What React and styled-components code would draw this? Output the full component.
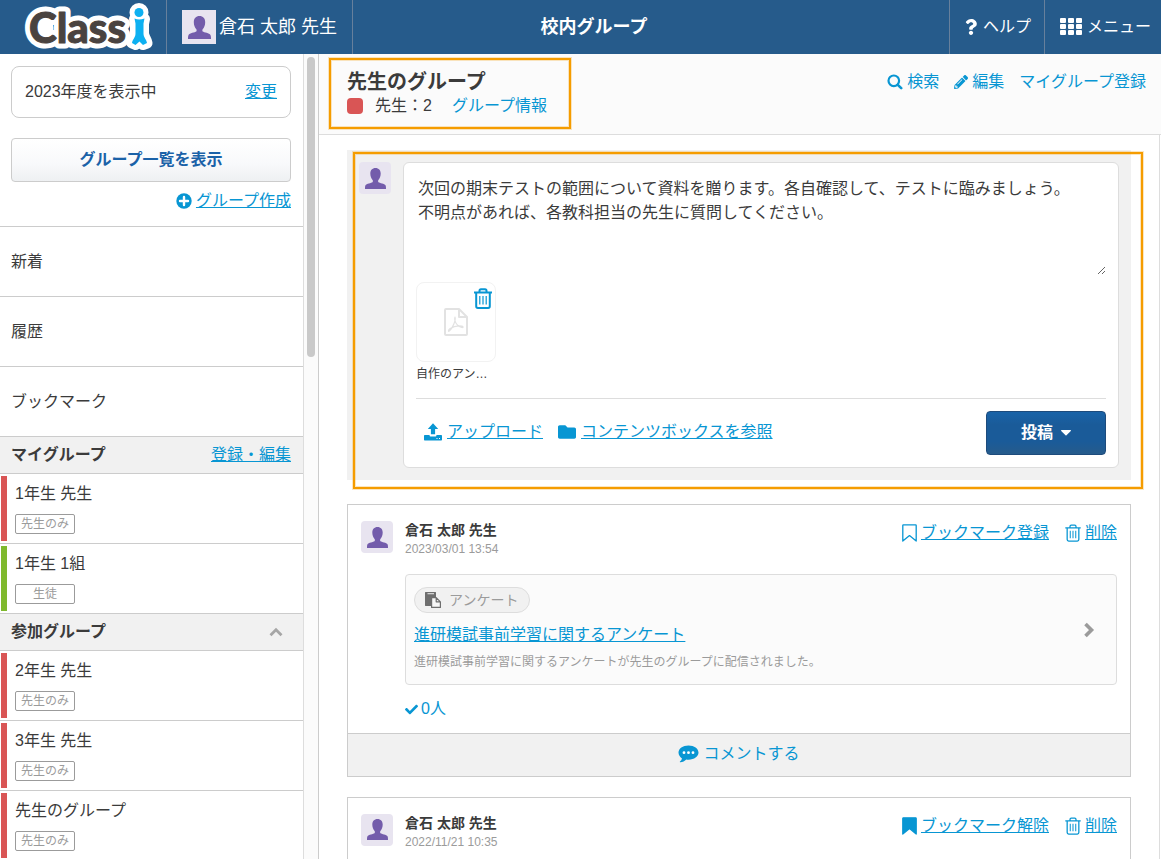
import React from "react";
import styled, { createGlobalStyle } from "styled-components";
import { FaQuestion, FaFolder, FaCheck, FaPencilAlt } from "react-icons/fa";

const color = {
  navy: "#265b8b",
  link: "#0896d3",
  text: "#3b3b3b",
  muted: "#9b9b9b",
  line: "#cccccc",
  softLine: "#dddddd",
  panel: "#f1f1f1",
  pale: "#fbfbfb",
  red: "#d95555",
  green: "#7fb92e",
  purple: "#735cab",
  lilac: "#e8e4f0",
  orange: "#f59c00",
};

const GlobalStyle = createGlobalStyle`
  *, *::before, *::after { box-sizing: border-box; }
  body {
    margin: 0;
    background: #fff;
    color: ${color.text};
    font: 16px/24px "Liberation Sans", "Noto Sans CJK JP", sans-serif;
  }
  h1, h2, h3, p, ul { margin: 0; padding: 0; }
  ul { list-style: none; }
  button, textarea { font: inherit; color: inherit; }
  button { cursor: pointer; }
  svg { display: block; flex: none; }
`;

/* ---------- page frame ---------- */

const Page = styled.div`
  display: flex;
  flex-direction: column;
  height: 100vh;
`;

const TopBar = styled.header`
  display: flex;
  flex: none;
  height: 54px;
  background: ${color.navy};
  color: #fff;
`;

const BarCell = styled.a`
  display: flex;
  align-items: center;
  gap: ${(p) => p.$gap || 0}px;
  padding: ${(p) => p.$pad};
  color: #fff;
  font-size: ${(p) => p.$size || 16}px;
  text-decoration: none;
  white-space: nowrap;
  border: 0 solid #67809c;
  border-width: ${(p) => (p.$side === "left" ? "0 0 0 1px" : "0 1px 0 0")};
`;

const BarTitle = styled.h1`
  flex: 1;
  padding-right: 114px;
  font-size: 18px;
  line-height: 54px;
  text-align: center;
`;

const Body = styled.div`
  display: flex;
  flex: 1;
  min-height: 0;
`;

/* ---------- avatar ---------- */

const AvatarTile = styled.span`
  display: flex;
  flex: none;
  align-items: center;
  justify-content: center;
  width: ${(p) => p.$size}px;
  height: ${(p) => p.$size}px;
  border-radius: ${(p) => p.$radius}px;
  background: ${color.lilac};
  color: ${color.purple};
`;

function Avatar({ size = 32, radius = 4 }) {
  const icon = size === 34 ? 23 : 21;
  return (
    <AvatarTile $size={size} $radius={radius}>
      <svg width={icon} height={icon} viewBox="0 0 21 21" fill="currentColor" aria-hidden="true">
        <path d="M10.5 0c3.2 0 5.2 2.2 5.2 5.6 0 2.8-1 5.1-2.3 6.4-.4.5-.4 1.7.1 2.200 1 .9 6.200 1.300 7 3.100.5 1 .5 2.500.5 3.700H0c0-1.200 0-2.700.5-3.700.8-1.800 6-2.200 7-3.100.5-.5.5-1.700.1-2.200C6.300 10.700 5.300 8.400 5.300 5.600 5.300 2.200 7.300 0 10.500 0z" />
      </svg>
    </AvatarTile>
  );
}

/* ---------- sidebar ---------- */

const Sidebar = styled.nav`
  flex: none;
  width: 304px;
  overflow: hidden;
  border-right: 1px solid ${color.softLine};
`;

const ScrollGutter = styled.div`
  flex: none;
  width: 15px;
  padding: 3px 3px 0;
  background: ${color.pale};
  border-right: 1px solid ${color.line};
`;

const ScrollThumb = styled.div`
  height: 300px;
  width: 8px;
  border-radius: 4px;
  background: #c9c9c9;
`;

const SidebarTop = styled.div`
  padding: 12px 12px 13px 11px;
  border-bottom: 1px solid ${color.line};
`;

const YearBox = styled.div`
  display: flex;
  justify-content: space-between;
  padding: 13px;
  height: 52px;
  border: 1px solid ${color.line};
  border-radius: 8px;
`;

const ListButton = styled.button`
  display: block;
  width: 100%;
  height: 44px;
  margin: 20px 0 7px;
  padding: 0;
  border: 1px solid ${color.line};
  border-radius: 4px;
  background: linear-gradient(#fff, #f8f9fb 60%, #eef0f2);
  color: #1b62a8;
  font-weight: bold;
`;

const Link = styled.a`
  color: ${color.link};
  text-decoration: ${(p) => (p.$plain ? "none" : "underline")};
  text-decoration-thickness: 1px;
  white-space: nowrap;
`;

const IconLink = styled.span`
  display: inline-flex;
  align-items: center;
  gap: ${(p) => p.$gap || 4}px;
  color: ${color.link};
`;

const CreateRow = styled.div`
  display: flex;
  justify-content: flex-end;
`;

const MenuItem = styled.a`
  display: flex;
  align-items: center;
  height: 70px;
  padding: 0 11px;
  border-bottom: 1px solid ${color.line};
  color: inherit;
  text-decoration: none;
`;

const SectionHead = styled.div`
  display: flex;
  align-items: center;
  justify-content: space-between;
  height: 37px;
  padding: 0 12px 0 11px;
  border-bottom: 1px solid ${color.line};
  background: ${color.panel};
  color: ${color.text};
`;

const SectionTitle = styled.h2`
  font-size: 16px;
`;

const ToggleButton = styled.button`
  padding: 0 8px;
  border: 0;
  background: none;
  color: #a6a6a6;
`;

const GroupRow = styled.li`
  display: flex;
  gap: 8px;
  height: 70px;
  padding: 2px 1px;
  border-bottom: 1px solid ${color.line};
`;

const ColorBar = styled.span`
  flex: none;
  width: 6px;
  height: 65px;
  background: ${(p) => p.$color};
`;

const GroupText = styled.div`
  display: flex;
  flex-direction: column;
  align-items: flex-start;
  gap: 8px;
  padding-top: 6px;
`;

const Badge = styled.span`
  width: 60px;
  height: 20px;
  border: 1px solid ${color.muted};
  border-radius: 2px;
  color: ${color.muted};
  font-size: 12px;
  line-height: 18px;
  text-align: center;
`;

/* ---------- main column ---------- */

const Main = styled.main`
  display: flex;
  flex: 1;
  flex-direction: column;
  min-width: 0;
  overflow: hidden;
`;

const GroupHeader = styled.div`
  position: relative;
  display: flex;
  flex: none;
  justify-content: space-between;
  height: 81px;
  padding: 16px 15px 0 28px;
  border-bottom: 1px solid ${color.softLine};
  background: ${color.pale};
`;

const GroupName = styled.h2`
  font-size: 20px;
  line-height: 24px;
`;

const GroupMeta = styled.div`
  display: flex;
  align-items: center;
`;

const GroupMark = styled.span`
  width: 16px;
  height: 16px;
  margin-right: 12px;
  border-radius: 4px;
  background: ${color.red};
`;

const MemberCount = styled.span`
  margin-right: 20px;
`;

const HeaderLinks = styled.div`
  display: flex;
  gap: 15px;
  height: 24px;
`;

const Highlight = styled.div`
  position: absolute;
  inset: ${(p) => p.$inset};
  width: ${(p) => p.$width || "auto"};
  border: 2px solid ${color.orange};
  box-shadow: 0 0 0 1px rgba(245, 156, 0, 0.25), inset 0 0 0 1px rgba(245, 156, 0, 0.25);
  pointer-events: none;
`;

const Feed = styled.div`
  display: flex;
  flex: 1;
  flex-direction: column;
  min-height: 0;
  margin-right: 1px;
  padding: 15px 28px 0;
  border-right: 1px solid ${color.softLine};
`;

const Composer = styled.form`
  position: relative;
  display: flex;
  flex: none;
  gap: 12px;
  margin-bottom: 24px;
  padding: 12px;
  background: ${color.panel};
`;

const ComposerCard = styled.div`
  flex: 1;
  min-width: 0;
  padding: 12px;
  border: 1px solid ${color.softLine};
  border-radius: 6px;
  background: #fff;
`;

const MessageBox = styled.textarea`
  display: block;
  width: 100%;
  height: 100px;
  margin-bottom: 7px;
  padding: 2px;
  border: 0;
  outline: 0;
  background: transparent;
  line-height: 24px;
  resize: vertical;
`;

const Attachment = styled.div`
  width: 80px;
  margin-bottom: 12px;
`;

const AttachmentTile = styled.div`
  position: relative;
  display: flex;
  align-items: center;
  justify-content: center;
  height: 80px;
  border: 1px solid #f2f2f2;
  border-radius: 8px;
  color: #e2e2e2;
`;

const RemoveButton = styled.button`
  position: absolute;
  top: 5px;
  right: 3px;
  padding: 0;
  border: 0;
  background: none;
  color: ${color.link};
`;

const AttachmentName = styled.div`
  font-size: 12px;
  line-height: 24px;
`;

const ComposerActions = styled.div`
  display: flex;
  align-items: center;
  justify-content: space-between;
  padding: 12px 0 0 8px;
  border-top: 1px solid ${color.softLine};
`;

const AttachLinks = styled.div`
  display: flex;
  gap: 15px;
  padding-bottom: 3px;
`;

const PostButton = styled.button`
  display: flex;
  align-items: center;
  justify-content: center;
  gap: 8px;
  width: 120px;
  height: 44px;
  border: 1px solid #1d4b7c;
  border-radius: 4px;
  background: linear-gradient(#1963a8, #1a5b99 30%, #1a5b99 70%, #265b8b);
  color: #fff;
  font-weight: bold;
`;

const Post = styled.article`
  flex: none;
  margin-bottom: 20px;
  border: 1px solid ${color.line};
  background: #fff;
`;

const PostBody = styled.div`
  display: flex;
  gap: 12px;
  padding: 16px 13px 10px;
`;

const PostColumn = styled.div`
  flex: 1;
  min-width: 0;
`;

const PostHead = styled.div`
  display: flex;
  justify-content: space-between;
`;

const Author = styled.h3`
  font-size: 14px;
  line-height: 18px;
`;

const PostDate = styled.time`
  display: block;
  color: ${color.muted};
  font-size: 12px;
  line-height: 20px;
`;

const PostLinks = styled.div`
  display: flex;
  align-items: flex-start;
  gap: 16px;
`;

const SurveyCard = styled.div`
  display: flex;
  align-items: center;
  justify-content: space-between;
  height: 111px;
  margin: 15px 0 12px;
  padding: 0 20px 0 8px;
  border: 1px solid ${color.softLine};
  border-radius: 4px;
  background: ${color.pale};
  color: ${color.muted};
`;

const Pill = styled.span`
  display: flex;
  align-items: center;
  gap: 8px;
  width: 116px;
  height: 26px;
  padding-left: 10px;
  border: 1px solid ${color.softLine};
  border-radius: 13px;
  background: ${color.panel};
  font-size: 14px;
  line-height: 20px;
`;

const SurveyText = styled.div`
  display: flex;
  flex-direction: column;
  align-items: flex-start;
`;

const SurveyTitle = styled.div`
  margin: 10px 0 5px;
`;

const SurveyNote = styled.p`
  font-size: 12px;
  line-height: 20px;
`;

const CommentButton = styled.button`
  display: flex;
  align-items: center;
  justify-content: center;
  gap: 4px;
  width: 100%;
  height: 43px;
  padding: 0 0 2px;
  border: 0;
  border-top: 1px solid ${color.line};
  background: ${color.panel};
  color: ${color.link};
`;

/* ---------- icons ---------- */

const Logo = () => (
  <svg width="134" height="54" viewBox="0 0 134 54" role="img" aria-label="Classi">
    <g
      fontFamily="Lato, sans-serif"
      fontWeight="900"
      fontSize="42"
      strokeLinejoin="round"
      strokeLinecap="round"
    >
      <g fill="#fff" stroke="#fff" strokeWidth="11">
        <text x="6" y="43" aria-hidden="true">
          Class
        </text>
        <circle cx="20" cy="28" r="5" />
        <circle cx="116" cy="12.5" r="4" />
        <path d="M111.500 19h10l-1 5v9c0 4 3 6 3.500 10l-4 1.500-3.500-3.500-4 3.500-3.500-1.500c.5-4 3.500-6 3.500-10v-9z" />
      </g>
      <text x="6" y="43" fill="#4a4340" stroke="#4a4340" strokeWidth="1">
        Class
      </text>
      <g fill="#0db0f1">
        <circle cx="116" cy="12.5" r="4.500" />
        <path d="M111.500 18.500q4.500 2 10 0l-1 5v10c0 4 3 6 3.500 9.500l-4 2-3.500-3.500-4 3.500-3.500-2c.5-3.500 3.500-5.500 3.500-9.500v-10z" />
      </g>
    </g>
  </svg>
);

const GridIcon = () => (
  <svg width="22" height="18" viewBox="0 0 22 18" fill="currentColor" aria-hidden="true">
    {[0, 8, 16].map((x) =>
      [0, 6, 12].map((y) => <rect key={`${x}-${y}`} x={x} y={y} width="6" height="5" rx="1" />)
    )}
  </svg>
);

const PlusIcon = () => (
  <svg width="16" height="16" viewBox="0 0 16 16" aria-hidden="true">
    <circle cx="8" cy="8" r="7.700" fill="currentColor" />
    <path d="M8 4v8M4 8h8" stroke="#fff" strokeWidth="2.400" strokeLinecap="round" />
  </svg>
);

const SearchIcon = () => (
  <svg width="16" height="16" viewBox="0 0 16 16" fill="none" stroke="currentColor" aria-hidden="true">
    <circle cx="6.800" cy="6.800" r="5.300" strokeWidth="2.200" />
    <path d="M10.800 10.800l3.400 3.400" strokeWidth="2.600" strokeLinecap="round" />
  </svg>
);

const TrashIcon = ({ width = 16, height = 18, stroke = 1.5 }) => (
  <svg
    width={width}
    height={height}
    viewBox="0 0 18 21"
    fill="none"
    stroke="currentColor"
    strokeWidth={stroke}
    aria-hidden="true"
  >
    <path d="M0 4.500h18M5.500 4V2.800C5.500 1.800 6 1.200 7 1.200h4c1 0 1.500.6 1.500 1.600V4M2.200 4.500v13.700c0 1.100.6 1.700 1.700 1.700h10.200c1.100 0 1.700-.6 1.700-1.700V4.500" />
    <path d="M5.800 8v8.500M9 8v8.500M12.200 8v8.500" strokeWidth="1.200" />
  </svg>
);

const PdfIcon = () => (
  <svg
    width="24"
    height="28"
    viewBox="0 0 24 28"
    fill="none"
    stroke="currentColor"
    strokeWidth="2"
    strokeLinejoin="round"
    aria-hidden="true"
  >
    <path d="M1 2c0-.6.4-1 1-1h13l8 8v17c0 .6-.4 1-1 1H2c-.6 0-1-.4-1-1zM15 1v8h8" />
    <path
      strokeWidth="1.200"
      strokeLinecap="round"
      d="M11 9c-.6 2 .2 5.200 2 7.500 1.600 2 3.800 3.200 5.800 3 .6-.2.2-1.200-1-1.400-3.400-.6-8.600.4-11.600 2.400-1.200.8-2 2.100-1.600 2.700.6.500 2.400-1.600 4-4.600C10.200 15.600 12 12 11 9z"
    />
  </svg>
);

const PasteIcon = () => (
  <svg width="16" height="16" viewBox="0 0 16 16" aria-hidden="true">
    <path fill="#6e6e6e" d="M.5 0h10c.3 0 .5.2.5.5V6H6v8H.5c-.3 0-.5-.2-.5-.5V.5C0 .2.2 0 .5 0z" />
    <path fill="#d0d0d0" d="M2.500 1h6.500v1.300H2.500z" />
    <path
      fill="#f7f7f7"
      stroke="#6e6e6e"
      strokeWidth="1.200"
      strokeLinejoin="round"
      d="M6.600 5.600h4.600l4.200 4.200v5.600H6.600zM11.200 5.600v4.200h4.200"
    />
  </svg>
);

const BookmarkIcon = ({ filled }) => (
  <svg
    width="15"
    height="18"
    viewBox="0 0 15 18"
    fill={filled ? "currentColor" : "none"}
    stroke="currentColor"
    strokeWidth="1.300"
    strokeLinejoin="round"
    aria-hidden="true"
  >
    <path d="M.8 1.400c0-.4.2-.6.600-.6h12.200c.4 0 .6.2.600.600v15.600L7.500 11.600.8 17z" />
  </svg>
);

const UploadIcon = () => (
  <svg width="18" height="18" viewBox="0 0 18 18" aria-hidden="true">
    <path
      fill="currentColor"
      d="M9 .3l5.200 5.700h-3.100v5.300H6.900V6H3.800zM1 12h4.600v.8c0 .5.300.8.800.8h5.200c.5 0 .8-.3.800-.8V12H17c.6 0 1 .4 1 1v3.500c0 .6-.4 1-1 1H1c-.6 0-1-.4-1-1V13c0-.6.4-1 1-1z"
    />
    <path d="M12.500 15.500h1M15 15.500h1" stroke="#fff" strokeWidth="1" />
  </svg>
);

const CommentIcon = () => (
  <svg width="21" height="18" viewBox="0 0 21 18" aria-hidden="true">
    <path
      fill="currentColor"
      d="M10.500.5C16.200.5 20.500 3.600 20.500 7.600s-4.300 7.100-10 7.100c-.8 0-1.500-.1-2.200-.2-1.600 1.500-3.600 2.600-6 2.800-.5 0-.6-.4-.3-.7 1-.9 1.700-1.900 2-3.200C1.900 12.100.5 10 .5 7.600.5 3.600 4.800.5 10.500.5z"
    />
    <g fill="#fff">
      <circle cx="6" cy="7.700" r="1.400" />
      <circle cx="10.500" cy="7.700" r="1.400" />
      <circle cx="15" cy="7.700" r="1.400" />
    </g>
  </svg>
);

const ChevronRightIcon = () => (
  <svg width="14" height="16" viewBox="0 0 14 16" fill="none" stroke="currentColor" aria-hidden="true">
    <path d="M3.500 2l6 6-6 6" strokeWidth="3.600" />
  </svg>
);

const ChevronUpIcon = () => (
  <svg width="14" height="10" viewBox="0 0 14 10" fill="none" stroke="currentColor" aria-hidden="true">
    <path d="M1.500 8.200L7 2.800l5.500 5.400" strokeWidth="2.800" />
  </svg>
);

const CaretIcon = () => (
  <svg width="10" height="6" viewBox="0 0 10 6" fill="currentColor" aria-hidden="true">
    <path d="M.6 0h8.800c.5 0 .8.500.400.9L5.500 5.300c-.3.300-.7.300-1 0L.2.900C-.2.500.1 0 .6 0z" />
  </svg>
);

/* ---------- content ---------- */

const menu = ["新着", "履歴", "ブックマーク"];

const myGroups = [
  { name: "1年生 先生", badge: "先生のみ", color: color.red },
  { name: "1年生 1組", badge: "生徒", color: color.green },
];

const joinedGroups = [
  { name: "2年生 先生", badge: "先生のみ", color: color.red },
  { name: "3年生 先生", badge: "先生のみ", color: color.red },
  { name: "先生のグループ", badge: "先生のみ", color: color.red },
];

const draft =
  "次回の期末テストの範囲について資料を贈ります。各自確認して、テストに臨みましょう。\n不明点があれば、各教科担当の先生に質問してください。";

function GroupList({ groups }) {
  return (
    <ul>
      {groups.map((g) => (
        <GroupRow key={g.name}>
          <ColorBar $color={g.color} />
          <GroupText>
            <span>{g.name}</span>
            <Badge>{g.badge}</Badge>
          </GroupText>
        </GroupRow>
      ))}
    </ul>
  );
}

function PostTop({ date, bookmarked }) {
  return (
    <PostHead>
      <div>
        <Author>倉石 太郎 先生</Author>
        <PostDate>{date}</PostDate>
      </div>
      <PostLinks>
        <IconLink>
          <BookmarkIcon filled={bookmarked} />
          <Link href="#bookmark">{bookmarked ? "ブックマーク解除" : "ブックマーク登録"}</Link>
        </IconLink>
        <IconLink>
          <TrashIcon />
          <Link href="#delete">削除</Link>
        </IconLink>
      </PostLinks>
    </PostHead>
  );
}

export default function App() {
  return (
    <Page>
      <GlobalStyle />
      <TopBar>
        <BarCell href="#home" $pad="0 9px 0 23px">
          <Logo />
        </BarCell>
        <BarCell href="#profile" $pad="0 15px" $gap={3} $size={18}>
          <Avatar size={34} radius={0} />
          倉石 太郎 先生
        </BarCell>
        <BarTitle>校内グループ</BarTitle>
        <BarCell href="#help" $side="left" $pad="0 13px" $gap={4}>
          <FaQuestion size={16} />
          ヘルプ
        </BarCell>
        <BarCell href="#menu" $side="left" $pad="0 10px 0 15px" $gap={5}>
          <GridIcon />
          メニュー
        </BarCell>
      </TopBar>

      <Body>
        <Sidebar>
          <SidebarTop>
            <YearBox>
              <span>2023年度を表示中</span>
              <Link href="#year">変更</Link>
            </YearBox>
            <ListButton type="button">グループ一覧を表示</ListButton>
            <CreateRow>
              <IconLink>
                <PlusIcon />
                <Link href="#create">グループ作成</Link>
              </IconLink>
            </CreateRow>
          </SidebarTop>
          {menu.map((label) => (
            <MenuItem key={label} href="#list">
              {label}
            </MenuItem>
          ))}
          <SectionHead>
            <SectionTitle>マイグループ</SectionTitle>
            <Link href="#edit-groups">登録・編集</Link>
          </SectionHead>
          <GroupList groups={myGroups} />
          <SectionHead>
            <SectionTitle>参加グループ</SectionTitle>
            <ToggleButton type="button" aria-label="参加グループを閉じる">
              <ChevronUpIcon />
            </ToggleButton>
          </SectionHead>
          <GroupList groups={joinedGroups} />
        </Sidebar>
        <ScrollGutter>
          <ScrollThumb />
        </ScrollGutter>

        <Main>
          <GroupHeader>
            <div>
              <GroupName>先生のグループ</GroupName>
              <GroupMeta>
                <GroupMark />
                <MemberCount>先生：2</MemberCount>
                <Link href="#info" $plain>
                  グループ情報
                </Link>
              </GroupMeta>
            </div>
            <HeaderLinks>
              <IconLink>
                <SearchIcon />
                <Link href="#search" $plain>
                  検索
                </Link>
              </IconLink>
              <IconLink>
                <FaPencilAlt size={14} />
                <Link href="#edit" $plain>
                  編集
                </Link>
              </IconLink>
              <Link href="#register" $plain>
                マイグループ登録
              </Link>
            </HeaderLinks>
            <Highlight $inset="4px auto 5px 10px" $width="242px" />
          </GroupHeader>

          <Feed>
            <Composer>
              <Avatar />
              <ComposerCard>
                <MessageBox aria-label="投稿内容" defaultValue={draft} />
                <Attachment>
                  <AttachmentTile>
                    <PdfIcon />
                    <RemoveButton type="button" aria-label="添付を削除">
                      <TrashIcon width={18} height={21} stroke={2} />
                    </RemoveButton>
                  </AttachmentTile>
                  <AttachmentName>自作のアン…</AttachmentName>
                </Attachment>
                <ComposerActions>
                  <AttachLinks>
                    <IconLink $gap={5}>
                      <UploadIcon />
                      <Link href="#upload">アップロード</Link>
                    </IconLink>
                    <IconLink $gap={5}>
                      <FaFolder size={18} />
                      <Link href="#contents">コンテンツボックスを参照</Link>
                    </IconLink>
                  </AttachLinks>
                  <PostButton type="button">
                    投稿
                    <CaretIcon />
                  </PostButton>
                </ComposerActions>
              </ComposerCard>
              <Highlight $inset="2px -12px -9px 6px" />
            </Composer>

            <Post>
              <PostBody>
                <Avatar />
                <PostColumn>
                  <PostTop date="2023/03/01 13:54" />
                  <SurveyCard>
                    <SurveyText>
                      <Pill>
                        <PasteIcon />
                        アンケート
                      </Pill>
                      <SurveyTitle>
                        <Link href="#survey">進研模試事前学習に関するアンケート</Link>
                      </SurveyTitle>
                      <SurveyNote>
                        進研模試事前学習に関するアンケートが先生のグループに配信されました。
                      </SurveyNote>
                    </SurveyText>
                    <ChevronRightIcon />
                  </SurveyCard>
                  <IconLink $gap={3}>
                    <FaCheck size={13} />
                    <Link href="#readers" $plain>
                      0人
                    </Link>
                  </IconLink>
                </PostColumn>
              </PostBody>
              <CommentButton type="button">
                <CommentIcon />
                コメントする
              </CommentButton>
            </Post>

            <Post>
              <PostBody>
                <Avatar />
                <PostColumn>
                  <PostTop date="2022/11/21 10:35" bookmarked />
                </PostColumn>
              </PostBody>
            </Post>
          </Feed>
        </Main>
      </Body>
    </Page>
  );
}
